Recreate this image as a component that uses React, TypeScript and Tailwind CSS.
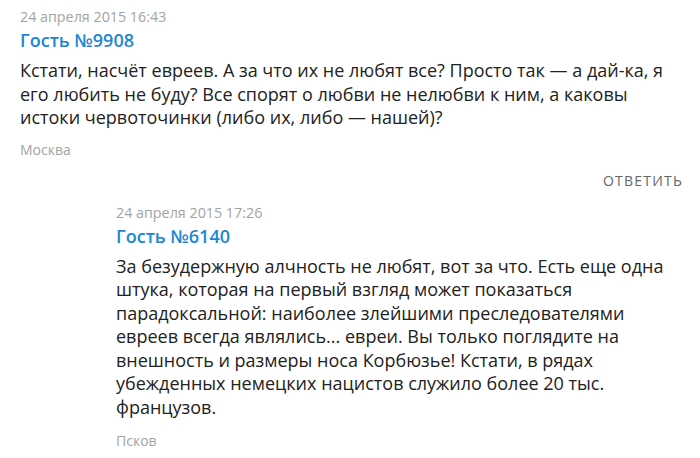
type Comment = {
  date: string
  author: string
  text: string
  city: string
}

const first: Comment = {
  date: '24 апреля 2015 16:43',
  author: 'Гость №9908',
  text: 'Кстати, насчёт евреев. А за что их не любят все? Просто так — а дай-ка, я его любить не буду? Все спорят о любви не нелюбви к ним, а каковы истоки червоточинки (либо их, либо — нашей)?',
  city: 'Москва',
}

const reply: Comment = {
  date: '24 апреля 2015 17:26',
  author: 'Гость №6140',
  text: 'За безудержную алчность не любят, вот за что. Есть еще одна штука, которая на первый взгляд может показаться парадоксальной: наиболее злейшими преследователями евреев всегда являлись... евреи. Вы только поглядите на внешность и размеры носа Корбюзье! Кстати, в рядах убежденных немецких нацистов служило более 20 тыс. французов.',
  city: 'Псков',
}

function CommentBody({ c, cityGap }: { c: Comment; cityGap: string }) {
  return (
    <div>
      <div className="text-[14.3px] leading-[20px] text-[#a3a3a3]">{c.date}</div>
      <div className="mt-[1px] text-[18px] leading-[24px] font-semibold text-[#1b87d4]">{c.author}</div>
      <p className="mt-[7px] text-[18px] leading-[23.5px] text-[#222]">{c.text}</p>
      <div className={cityGap + ' text-[14px] leading-[20px] text-[#a3a3a3]'}>{c.city}</div>
    </div>
  )
}

export default function App() {
  return (
    <div className="w-[700px] h-[458px] overflow-hidden bg-white pl-[20px] pr-[17px] pt-[7px] font-['Open_Sans',sans-serif]">
      <CommentBody c={first} cityGap="mt-[10px]" />
      <div className="flex justify-end mt-[11px]">
        <button className="text-[14px] leading-[20px] tracking-[1.2px] text-[#666] uppercase">Ответить</button>
      </div>
      <div className="pl-[96px] mt-[12px]">
        <CommentBody c={reply} cityGap="mt-[12px]" />
      </div>
    </div>
  )
}
